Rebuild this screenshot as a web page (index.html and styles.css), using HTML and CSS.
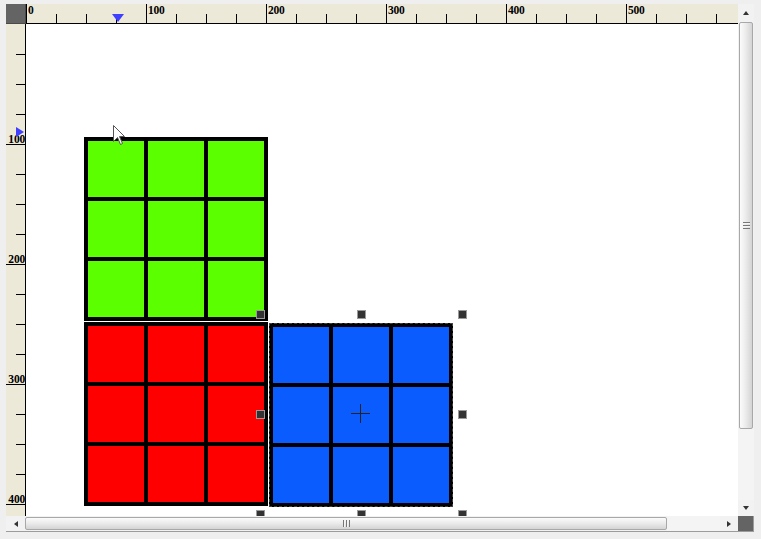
FILE: index.html
```html
<!DOCTYPE html>
<html>
<head>
<meta charset="utf-8">
<link rel="stylesheet" href="styles.css">
</head>
<body>
<div class="frame">
  <div class="app">
    <div class="corner"></div>
    <div class="hruler">
      <div class="hseg"><span>0</span></div>
      <div class="hseg"><span>100</span></div>
      <div class="hseg"><span>200</span></div>
      <div class="hseg"><span>300</span></div>
      <div class="hseg"><span>400</span></div>
      <div class="hseg"><span>500</span></div>
      <div class="hseg"></div>
      <div class="hmark"></div>
    </div>
    <div class="vscroll">
      <div class="sbtn"><span class="arr up"></span></div>
      <div class="vthumb"><span class="grip-v"></span></div>
      <div class="vtrack"></div>
      <div class="sbtn small"><span class="arr down"></span></div>
    </div>
    <div class="vruler">
      <div class="vseg"><span>100</span></div>
      <div class="vseg"><span>200</span></div>
      <div class="vseg"><span>300</span></div>
      <div class="vseg"><span>400</span></div>
      <div class="vseg"></div>
      <div class="vmark"></div>
    </div>
    <div class="canvas">
      <div class="block green" style="left:58px;top:113px">
        <i></i><i></i><i></i><i></i><i></i><i></i><i></i><i></i><i></i>
      </div>
      <div class="block red" style="left:58px;top:298px">
        <i></i><i></i><i></i><i></i><i></i><i></i><i></i><i></i><i></i>
      </div>
      <div class="block blue selected" style="left:243px;top:299px">
        <i></i><i></i><i></i><i></i><i></i><i></i><i></i><i></i><i></i>
      </div>
      <div class="sel" style="left:234px;top:290px">
        <b class="h tl"></b><b class="h tc"></b><b class="h tr"></b>
        <b class="h ml"></b><b class="h mr"></b>
        <b class="h bl"></b><b class="h bc"></b><b class="h br"></b>
        <span class="cross"></span>
      </div>
      <svg class="cursor" style="left:87px;top:101px" width="13" height="21" viewBox="0 0 13 21">
        <path d="M0.5 0.5 L0.5 16.5 L4.5 12.5 L7.5 19.5 L9.5 18.5 L6.5 11.5 L11.5 11.5 Z" fill="#fff" stroke="#555" stroke-width="1"/>
      </svg>
    </div>
    <div class="hscroll">
      <div class="sbtn wide"><span class="arr left"></span></div>
      <div class="hthumb"><span class="grip-h"></span></div>
      <div class="htrack"></div>
      <div class="sbtn wide2"><span class="arr right"></span></div>
    </div>
    <div class="corner2"></div>
  </div>
</div>
</body>
</html>
```

FILE: styles.css
```css
html, body {
  margin: 0;
  padding: 0;
  background: #efefef;
  width: 761px;
  height: 539px;
  overflow: hidden;
}

.frame {
  padding: 4px 0 0 6px;
}

.app {
  display: grid;
  grid-template-columns: 20px 712px 16px;
  grid-template-rows: 20px 492px 16px;
  width: 748px;
  height: 528px;
}

.corner {
  grid-column: 1;
  grid-row: 1;
  background: #646464;
  border-right: 1px solid #4a4a4a;
  border-bottom: 1px solid #4a4a4a;
}

.hruler {
  grid-column: 2;
  grid-row: 1;
  position: relative;
  display: flex;
  background: #ece9d8;
  border-bottom: 1px solid #000;
  overflow: hidden;
}

.hseg {
  flex: none;
  width: 120px;
  box-sizing: border-box;
  border-left: 1px solid #000;
  background-image: repeating-linear-gradient(to right, #000 0 1px, transparent 1px 30px);
  background-origin: border-box;
  background-size: 100% 9px;
  background-position: left bottom;
  background-repeat: no-repeat;
}

.hseg span, .vseg span {
  font-family: "Liberation Serif", "DejaVu Serif", serif;
  font-weight: bold;
  font-size: 11.5px;
  line-height: 10px;
  color: #000;
  letter-spacing: -0.2px;
}

.hseg span {
  display: block;
  padding-left: 1px;
  margin-top: 1px;
}

.hmark {
  position: absolute;
  left: 86px;
  top: 10px;
  width: 0;
  height: 0;
  border-left: 6px solid transparent;
  border-right: 6px solid transparent;
  border-top: 8px solid #3f3fff;
}

.vruler {
  grid-column: 1;
  grid-row: 2;
  position: relative;
  background: #ece9d8;
  border-right: 1px solid #000;
  padding-top: 1px;
  overflow: hidden;
}

.vseg {
  height: 120px;
  box-sizing: border-box;
  border-bottom: 1px solid #000;
  display: flex;
  align-items: flex-end;
  justify-content: flex-end;
  background-image: repeating-linear-gradient(to bottom, transparent 0 29px, #000 29px 30px);
  background-size: 9px 90px;
  background-position: right top;
  background-repeat: no-repeat;
}

.vseg span {
  display: block;
}

.vmark {
  position: absolute;
  left: 10px;
  top: 103px;
  width: 0;
  height: 0;
  border-top: 5px solid transparent;
  border-bottom: 5px solid transparent;
  border-left: 8px solid #3f3fff;
}

.canvas {
  grid-column: 2;
  grid-row: 2;
  position: relative;
  background: #fff;
  overflow: hidden;
}

.block {
  position: absolute;
  display: grid;
  grid-template-columns: repeat(3, 56px);
  grid-template-rows: repeat(3, 56px);
  gap: 4px;
  padding: 4px;
  background: #000;
}

.green i { background: #5cff00; }
.red i { background: #ff0000; }
.blue i { background: #0b5cff; }

.block.selected {
  outline: 1px dashed #444;
  outline-offset: -1px;
}

.sel {
  position: absolute;
  width: 202px;
  height: 200px;
}

.h {
  position: absolute;
  width: 7px;
  height: 7px;
  background: #333;
  border: 1px solid #9a9a9a;
  margin: -4px 0 0 -4px;
}
.tl { left: 0; top: 0; }
.tc { left: 50%; top: 0; }
.tr { left: 100%; top: 0; }
.ml { left: 0; top: 50%; }
.mr { left: 100%; top: 50%; }
.bl { left: 0; top: 100%; }
.bc { left: 50%; top: 100%; }
.br { left: 100%; top: 100%; }

.cross {
  position: absolute;
  left: 50%;
  top: 50%;
  width: 19px;
  height: 19px;
  margin: -10px 0 0 -10px;
  background:
    linear-gradient(#222, #222) center / 19px 1px no-repeat,
    linear-gradient(#222, #222) center / 1px 19px no-repeat;
}

.cursor {
  position: absolute;
}

.vscroll {
  grid-column: 3;
  grid-row: 1 / span 2;
  display: flex;
  flex-direction: column;
  background: #f2f2f2;
}

.sbtn {
  flex: none;
  height: 18px;
  display: flex;
  align-items: center;
  justify-content: center;
  background: #f2f2f2;
}
.sbtn.small { height: 16px; }

.arr {
  width: 0;
  height: 0;
}
.arr.up {
  border-left: 3px solid transparent;
  border-right: 3px solid transparent;
  border-bottom: 4px solid #333;
}
.arr.down {
  border-left: 3px solid transparent;
  border-right: 3px solid transparent;
  border-top: 4px solid #333;
}
.arr.left {
  border-top: 3px solid transparent;
  border-bottom: 3px solid transparent;
  border-right: 4px solid #333;
}
.arr.right {
  border-top: 3px solid transparent;
  border-bottom: 3px solid transparent;
  border-left: 4px solid #333;
}

.vthumb {
  flex: none;
  height: 407px;
  margin: 0 1px;
  box-sizing: border-box;
  border: 1px solid #a8a8a8;
  border-radius: 2px;
  background: linear-gradient(to right, #fbfbfb, #ececec 45%, #d4d4d4);
  display: flex;
  align-items: center;
  justify-content: center;
}

.grip-v {
  width: 7px;
  height: 7px;
  background: repeating-linear-gradient(to bottom, #777 0 1px, #f4f4f4 1px 2px, transparent 2px 3px);
}

.vtrack {
  flex: 1;
  background: #f4f4f4;
}

.hscroll {
  grid-column: 1 / span 2;
  grid-row: 3;
  display: flex;
  background: #f2f2f2;
  border-bottom: 1px solid #9c9c9c;
}

.sbtn.wide { width: 19px; height: auto; }
.sbtn.wide2 { width: 18px; height: auto; }

.hthumb {
  flex: none;
  width: 642px;
  margin: 1px 0;
  box-sizing: border-box;
  border: 1px solid #a8a8a8;
  border-radius: 2px;
  background: linear-gradient(to bottom, #fbfbfb, #ececec 45%, #d4d4d4);
  display: flex;
  align-items: center;
  justify-content: center;
}

.grip-h {
  width: 7px;
  height: 7px;
  background: repeating-linear-gradient(to right, #777 0 1px, #f4f4f4 1px 2px, transparent 2px 3px);
}

.htrack {
  flex: 1;
  background: #f4f4f4;
}

.corner2 {
  grid-column: 3;
  grid-row: 3;
  background: #646464;
  border-bottom: 1px solid #9c9c9c;
  border-right: 1px solid #9c9c9c;
}
```
